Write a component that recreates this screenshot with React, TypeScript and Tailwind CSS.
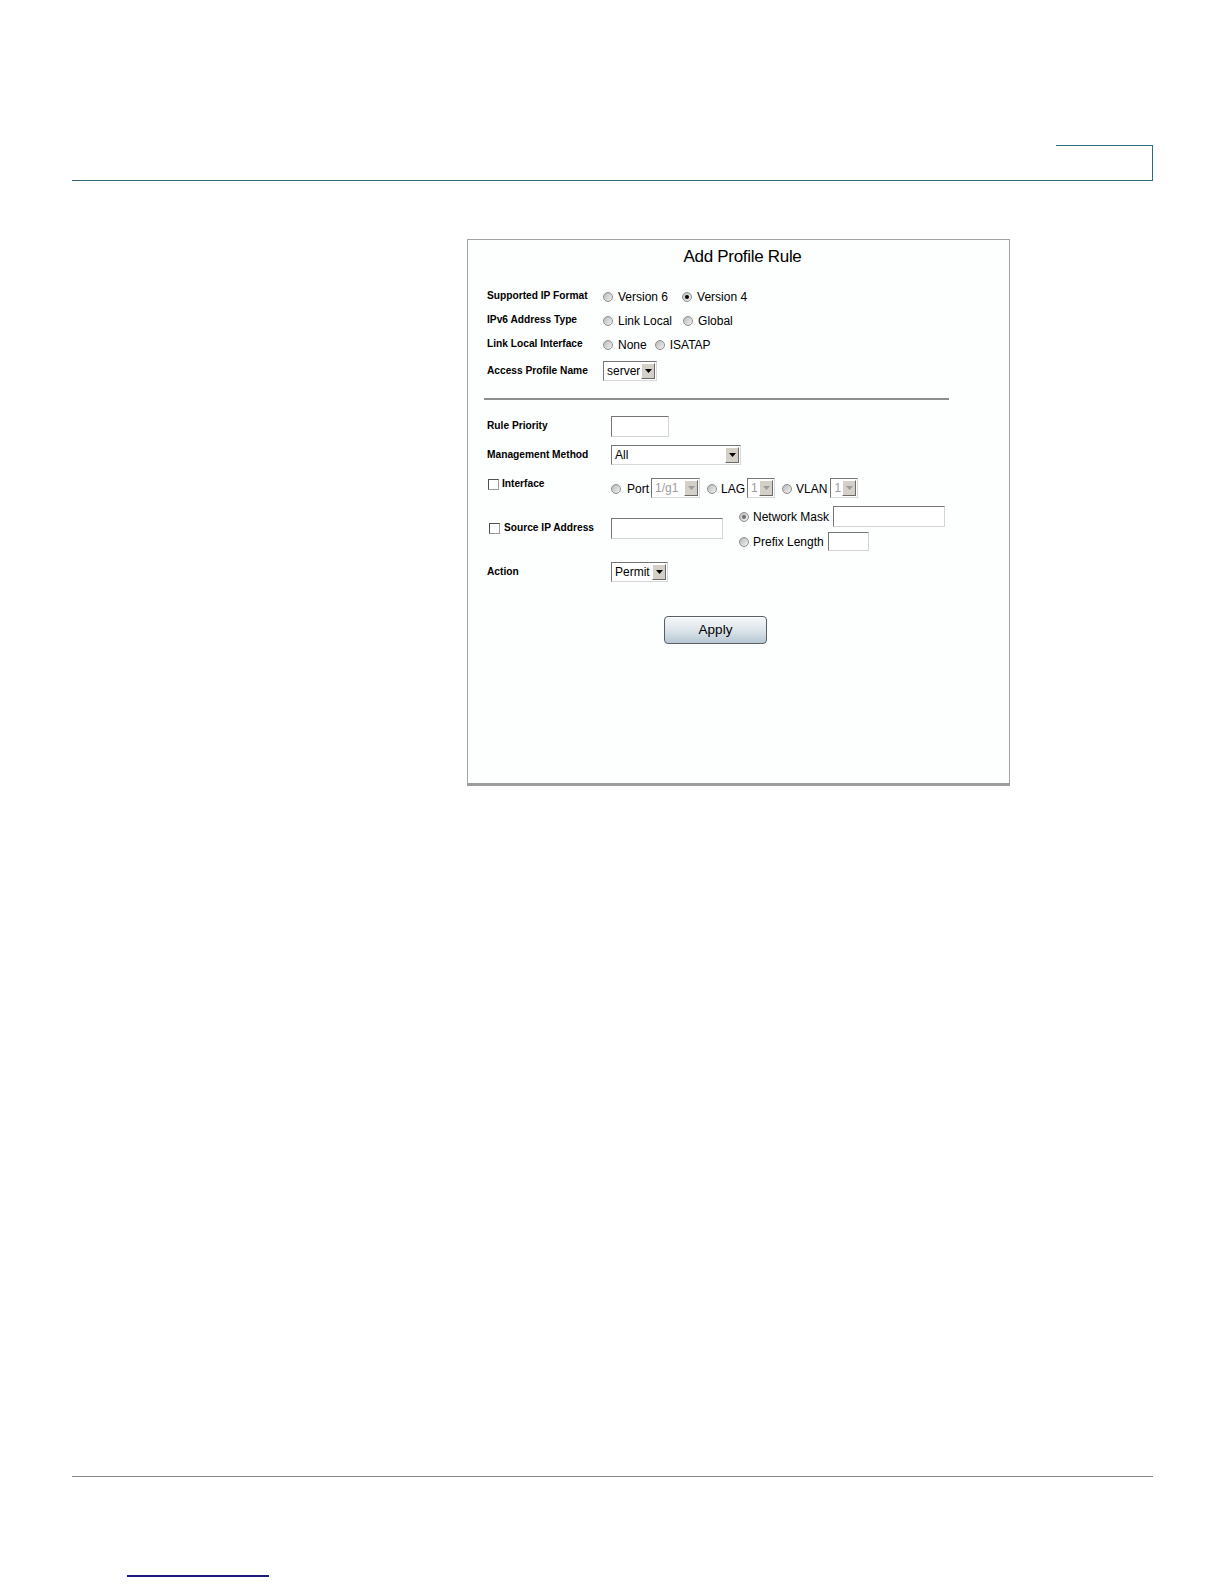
import React from "react";

function Radio({ checked = false, dim = false }: { checked?: boolean; dim?: boolean }) {
  return (
    <span className="w-[10px] h-[10px] rounded-full border border-[#8c8c8c] bg-linear-to-br from-[#b9b9b9] to-[#f4f4f4] flex items-center justify-center shrink-0 mt-[2px]">
      {checked && <span className={`w-[4px] h-[4px] rounded-full ${dim ? "bg-[#707070]" : "bg-black"}`} />}
    </span>
  );
}

function Checkbox() {
  return (
    <span className="w-[11px] h-[11px] bg-white border border-t-[#4f4f4f] border-l-[#4f4f4f] border-r-[#9a9a9a] border-b-[#9a9a9a] shrink-0" />
  );
}

function Select({ value, className, disabled = false }: { value: string; className: string; disabled?: boolean }) {
  return (
    <div
      className={`flex items-stretch bg-white border border-t-[#767676] border-l-[#767676] border-r-[#d8d8d8] border-b-[#d8d8d8] ${className}`}
    >
      <span
        className={`flex-1 pl-[3px] text-[12px] leading-none flex items-center overflow-hidden ${
          disabled ? "text-[#9c9c9c]" : "text-black"
        }`}
      >
        {value}
      </span>
      <span className="w-[14px] m-[1px] bg-[#d4d0c8] border border-t-white border-l-white border-r-[#6a6a6a] border-b-[#6a6a6a] flex items-center justify-center">
        <svg width="7" height="4" viewBox="0 0 7 4">
          <path d="M0 0h7L3.5 4z" fill={disabled ? "#9c9c9c" : "#000"} />
        </svg>
      </span>
    </div>
  );
}

function TextBox({ className }: { className: string }) {
  return (
    <span
      className={`block bg-white border border-t-[#767676] border-l-[#767676] border-r-[#d4d4d4] border-b-[#d4d4d4] ${className}`}
    />
  );
}

function Label({ children, className = "" }: { children: React.ReactNode; className?: string }) {
  return <span className={`text-[10.2px] font-bold text-black leading-none ${className}`}>{children}</span>;
}

function Opt({ children }: { children: React.ReactNode }) {
  return <span className="text-[12px] text-black leading-none">{children}</span>;
}

export default function App() {
  return (
    <div className="w-[1224px] h-[1584px] bg-white font-['Liberation_Sans',Arial,sans-serif] overflow-hidden">
      {/* chapter header rule */}
      <div className="pt-[145px]">
        <div className="ml-[72px] w-[1081px] h-[36px] border-b border-[#2f6b7b] flex justify-end">
          <div className="w-[97px] h-full border-t border-r border-[#2f6b7b]" />
        </div>
      </div>

      {/* screenshot panel */}
      <div className="mt-[58px] ml-[467px] w-[543px] h-[547px] border border-[#a3a3a3] border-b-[3px] border-b-[#9c9c9c] bg-[#fdfefe]">
        <div className="pt-[5px] pl-[8px] h-[29px] text-center">
          <span className="text-[17px] leading-[24px] tracking-[-0.3px] text-black">Add Profile Rule</span>
        </div>

        <div className="pl-[19px] mt-[15px] flex flex-col">
          <div className="h-[24px] flex items-center">
            <Label className="w-[116px]">Supported IP Format</Label>
            <Radio />
            <span className="ml-[5px]"><Opt>Version 6</Opt></span>
            <span className="ml-[14px]"><Radio checked /></span>
            <span className="ml-[5px]"><Opt>Version 4</Opt></span>
          </div>
          <div className="h-[24px] flex items-center">
            <Label className="w-[116px]">IPv6 Address Type</Label>
            <Radio />
            <span className="ml-[5px]"><Opt>Link Local</Opt></span>
            <span className="ml-[11px]"><Radio /></span>
            <span className="ml-[5px]"><Opt>Global</Opt></span>
          </div>
          <div className="h-[24px] flex items-center">
            <Label className="w-[116px]">Link Local Interface</Label>
            <Radio />
            <span className="ml-[5px]"><Opt>None</Opt></span>
            <span className="ml-[8px]"><Radio /></span>
            <span className="ml-[5px]"><Opt>ISATAP</Opt></span>
          </div>
          <div className="h-[24px] mt-[3px] flex items-center">
            <Label className="w-[116px]">Access Profile Name</Label>
            <Select value="server" className="w-[54px] h-[20px]" />
          </div>
        </div>

        <div className="mt-[15px] ml-[16px] w-[465px] h-[2px] bg-[#8e8e8e]" />

        <div className="pl-[19px] flex flex-col">
          <div className="h-[24px] mt-[14px] flex items-center">
            <Label className="w-[124px]">Rule Priority</Label>
            <TextBox className="w-[58px] h-[21px]" />
          </div>
          <div className="h-[24px] mt-[5px] flex items-center">
            <Label className="w-[124px]">Management Method</Label>
            <Select value="All" className="w-[130px] h-[20px]" />
          </div>
          <div className="h-[24px] mt-[9px] flex items-center">
            <div className="w-[124px] flex items-center gap-[3px] mb-[8px] pl-[1px]">
              <Checkbox />
              <Label>Interface</Label>
            </div>
            <Radio />
            <span className="ml-[6px]"><Opt>Port</Opt></span>
            <Select value="1/g1" className="ml-[2px] w-[49px] h-[20px]" disabled />
            <span className="ml-[7px]"><Radio /></span>
            <span className="ml-[4px]"><Opt>LAG</Opt></span>
            <Select value="1" className="ml-[2px] w-[28px] h-[20px]" disabled />
            <span className="ml-[7px]"><Radio /></span>
            <span className="ml-[4px]"><Opt>VLAN</Opt></span>
            <Select value="1" className="ml-[3px] w-[28px] h-[20px]" disabled />
          </div>
          <div className="h-[47px] mt-[5px] flex items-center">
            <div className="w-[124px] flex items-center gap-[4px] pl-[2px]">
              <Checkbox />
              <Label>Source IP Address</Label>
            </div>
            <TextBox className="w-[112px] h-[21px]" />
            <div className="ml-[16px] flex flex-col gap-[3px]">
              <div className="h-[22px] flex items-center">
                <Radio checked dim />
                <span className="ml-[4px]"><Opt>Network Mask</Opt></span>
                <TextBox className="ml-[4px] w-[112px] h-[21px]" />
              </div>
              <div className="h-[22px] flex items-center">
                <Radio />
                <span className="ml-[4px]"><Opt>Prefix Length</Opt></span>
                <TextBox className="ml-[4px] w-[41px] h-[19px]" />
              </div>
            </div>
          </div>
          <div className="h-[24px] mt-[8px] flex items-center">
            <Label className="w-[124px]">Action</Label>
            <Select value="Permit" className="w-[57px] h-[20px]" />
          </div>
          <div className="mt-[32px] ml-[177px]">
            <button
              type="button"
              className="w-[103px] h-[28px] rounded-[4px] border border-[#5a5f66] bg-linear-to-b from-[#f6f8fa] via-[#dde5eb] to-[#b7c7d3] text-[13.5px] text-black leading-none shadow-[inset_0_1px_0_#ffffff]"
            >
              Apply
            </button>
          </div>
        </div>
      </div>

      {/* footer rule */}
      <div className="mt-[690px] ml-[72px] w-[1081px] h-[1px] bg-[#8a8a8a]" />
      <div className="mt-[98px] ml-[127px] w-[142px] h-[2px] bg-[#1c1c7a]" />
    </div>
  );
}
